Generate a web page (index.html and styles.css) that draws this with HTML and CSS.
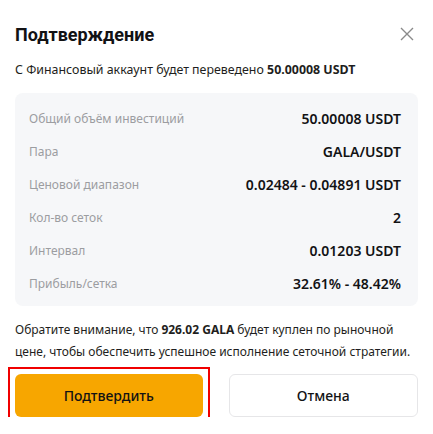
FILE: index.html
```html
<!DOCTYPE HTML>
<html lang="ru">
  <head>
    <title>Подтверждение</title>
    <meta charset="utf-8">
    <link rel="stylesheet" href="styles.css">
  </head>
  <body>

  <div class="modal">
    <div class="header">
      <div class="title">Подтверждение</div>
      <span class="close">
        <svg width="14" height="14" viewBox="0 0 14 14"><path d="M1 1 L13 13 M13 1 L1 13" stroke="#8a8a8a" stroke-width="1.4" fill="none"/></svg>
      </span>
    </div>

    <div class="sub">С Финансовый аккаунт будет переведено <b>50.00008 USDT</b></div>

    <div class="box">
      <div class="row"><span class="label">Общий объём инвестиций</span><span class="value">50.00008 USDT</span></div>
      <div class="row"><span class="label">Пара</span><span class="value">GALA/USDT</span></div>
      <div class="row"><span class="label">Ценовой диапазон</span><span class="value">0.02484 - 0.04891 USDT</span></div>
      <div class="row"><span class="label">Кол-во сеток</span><span class="value">2</span></div>
      <div class="row"><span class="label">Интервал</span><span class="value">0.01203 USDT</span></div>
      <div class="row"><span class="label">Прибыль/сетка</span><span class="value">32.61% - 48.42%</span></div>
    </div>

    <div class="note">Обратите внимание, что <b>926.02 GALA</b> будет куплен по рыночной цене, чтобы обеспечить успешное исполнение сеточной стратегии.</div>

    <div class="buttons">
      <button class="btn confirm">Подтвердить</button>
      <button class="btn cancel">Отмена</button>
    </div>
  </div>

  </body>
</html>
```
FILE: styles.css
```css
html {
  height: 100%;
}
body {
  margin: 0;
  padding: 0;
  background: #ffffff;
  color: #1e1e20;
  font-family: "Noto Sans", sans-serif;
}

.modal {
  padding: 18px 15px 0 15px;
}

.header {
  display: flex;
  justify-content: space-between;
  align-items: center;
  height: 32px;
}

.title {
  font-family: Roboto, sans-serif;
  font-size: 18px;
  font-weight: 700;
  color: #121214;
}

.close {
  display: flex;
  margin-right: 4px;
}

.sub {
  margin-top: 12px;
  font-size: 12.4px;
  line-height: 16px;
}

.sub b, .note b {
  font-weight: 700;
}

.box {
  margin-top: 15px;
  background-color: #f6f7f9;
  border-radius: 8px;
  padding: 9px 17px 6px 14px;
}

.row {
  display: flex;
  justify-content: space-between;
  align-items: center;
  height: 33px;
}

.label {
  font-size: 12px;
  color: #9c9da1;
}

.value {
  font-size: 14px;
  font-weight: 600;
  color: #121214;
}

.note {
  margin-top: 13px;
  font-size: 12px;
  line-height: 22px;
}

.buttons {
  display: flex;
  gap: 26px;
  margin-top: 11px;
}

.btn {
  flex: 1;
  height: 43px;
  border-radius: 6px;
  font-family: "Noto Sans", sans-serif;
  font-size: 14px;
  font-weight: 500;
  color: #121214;
  cursor: pointer;
}

.confirm {
  position: relative;
  background-color: #f7a600;
  border: none;
}

/* red highlight frame drawn over the confirm button */
.confirm::after {
  content: "";
  position: absolute;
  top: -7px;
  left: -7px;
  right: -7px;
  bottom: -7px;
  border: 2px solid #f00000;
}

.cancel {
  background-color: #ffffff;
  border: 1px solid #e6e6e8;
}
```
